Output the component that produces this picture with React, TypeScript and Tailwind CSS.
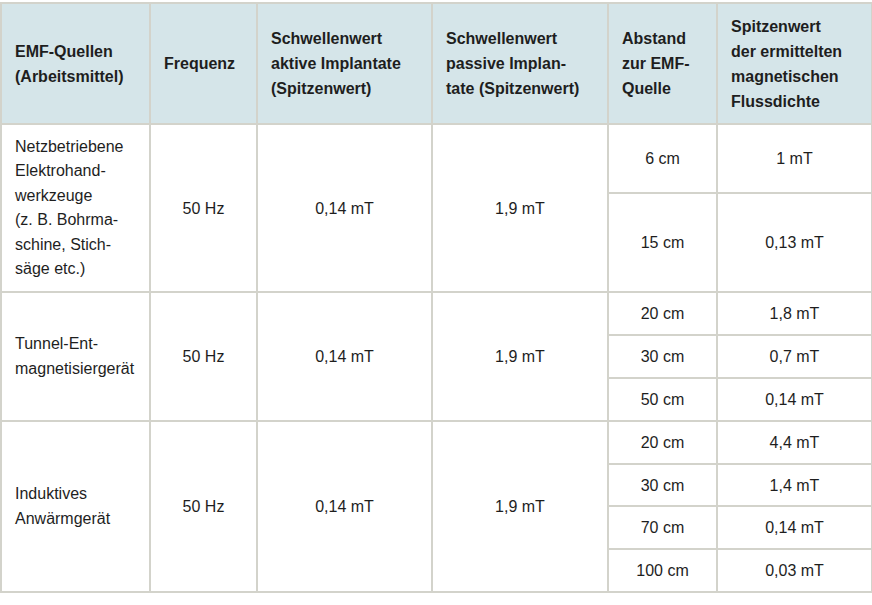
import React from 'react'

const font = { fontFamily: '"Liberation Sans", Arial, sans-serif' }

const th = 'border-2 border-[#d3d3cb] bg-[#d5e5e9] px-[13px] text-left align-middle font-bold text-[#1e1e1e] whitespace-nowrap'
const td = 'border-2 border-[#d3d3cb] text-center align-middle text-[#1e1e1e] whitespace-nowrap'

interface Group {
  source: string[]
  rows: { dist: string; value: string; h: string }[]
}

const groups: Group[] = [
  {
    source: ['Netzbetriebene', 'Elektrohand-', 'werkzeuge', '(z. B. Bohrma-', 'schine, Stich-', 'säge etc.)'],
    rows: [
      { dist: '6 cm', value: '1 mT', h: 'h-[69px]' },
      { dist: '15 cm', value: '0,13 mT', h: 'h-[99px]' }
    ]
  },
  {
    source: ['Tunnel-Ent-', 'magnetisiergerät'],
    rows: [
      { dist: '20 cm', value: '1,8 mT', h: 'h-[43px]' },
      { dist: '30 cm', value: '0,7 mT', h: 'h-[43px]' },
      { dist: '50 cm', value: '0,14 mT', h: 'h-[43px]' }
    ]
  },
  {
    source: ['Induktives', 'Anwärmgerät'],
    rows: [
      { dist: '20 cm', value: '4,4 mT', h: 'h-[43px]' },
      { dist: '30 cm', value: '1,4 mT', h: 'h-[42px]' },
      { dist: '70 cm', value: '0,14 mT', h: 'h-[43px]' },
      { dist: '100 cm', value: '0,03 mT', h: 'h-[43px]' }
    ]
  }
]

export default function App() {
  return (
    <div className="w-[872px] h-[605px] bg-white pt-[2px]" style={font}>
      <table className="w-[871px] table-fixed border-collapse text-[16px] leading-[25px]">
        <colgroup>
          <col className="w-[149px]" />
          <col className="w-[107px]" />
          <col className="w-[175px]" />
          <col className="w-[176px]" />
          <col className="w-[109px]" />
          <col className="w-[155px]" />
        </colgroup>
        <thead>
          <tr className="h-[121px]">
            <th className={th}>EMF-Quellen<br />(Arbeitsmittel)</th>
            <th className={th}>Frequenz</th>
            <th className={th}>Schwellenwert<br />aktive Implantate<br />(Spitzenwert)</th>
            <th className={th}>Schwellenwert<br />passive Implan-<br />tate (Spitzenwert)</th>
            <th className={th}>Abstand<br />zur EMF-<br />Quelle</th>
            <th className={th}>Spitzenwert<br />der ermittelten<br />magnetischen<br />Flussdichte</th>
          </tr>
        </thead>
        <tbody>
          {groups.map((g) =>
            g.rows.map((r, i) => (
              <tr key={g.source[0] + r.dist} className={r.h}>
                {i === 0 && (
                  <>
                    <td rowSpan={g.rows.length} className={`${td} text-left px-[13px] leading-[24.5px]`}>
                      {g.source.map((line) => (
                        <div key={line}>{line}</div>
                      ))}
                    </td>
                    <td rowSpan={g.rows.length} className={td}>50 Hz</td>
                    <td rowSpan={g.rows.length} className={td}>0,14 mT</td>
                    <td rowSpan={g.rows.length} className={td}>1,9 mT</td>
                  </>
                )}
                <td className={td}>{r.dist}</td>
                <td className={td}>{r.value}</td>
              </tr>
            ))
          )}
        </tbody>
      </table>
    </div>
  )
}
